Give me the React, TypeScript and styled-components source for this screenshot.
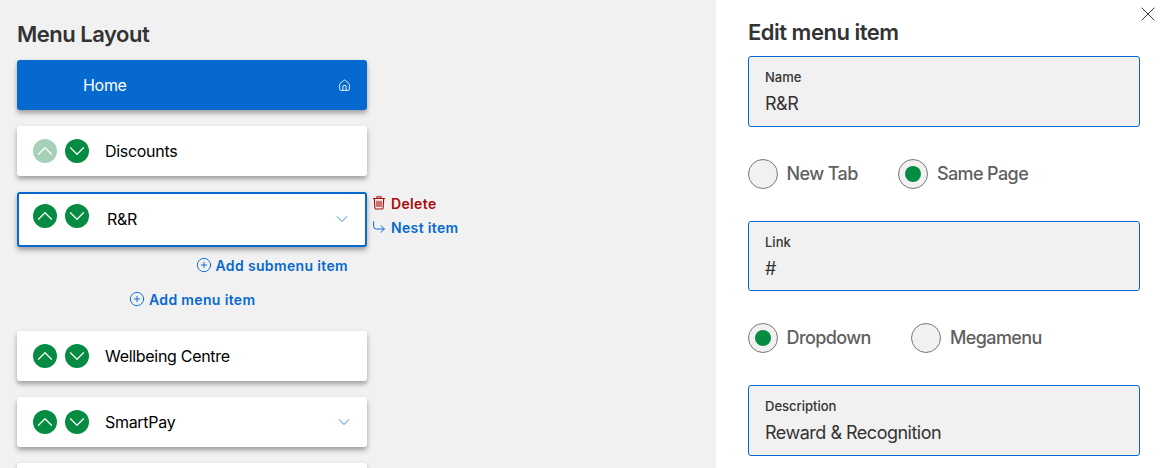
import React from "react";
import styled, { createGlobalStyle } from "styled-components";
import {
  ChevronDown,
  ChevronUp,
  CirclePlus,
  CornerDownRight,
  Home as HomeIcon,
  X,
} from "lucide-react";

const GlobalStyle = createGlobalStyle`
  html, body {
    margin: 0;
    padding: 0;
    height: 468px;
    overflow: hidden;
    font-family: Inter, "Liberation Sans", sans-serif;
    background: #ffffff;
  }
  * {
    box-sizing: border-box;
  }
  svg {
    flex-shrink: 0;
  }
`;

const Page = styled.div`
  display: flex;
  width: 1176px;
  height: 468px;
  overflow: hidden;
  position: relative;
`;

const LayoutPanel = styled.section`
  width: 716px;
  flex-shrink: 0;
  background: #f1f1f1;
  padding: 21px 0 0 17px;
`;

const Heading = styled.h2`
  margin: 0 0 13px;
  font-size: 22px;
  line-height: 26px;
  font-weight: 600;
  letter-spacing: -0.5px;
  color: #333333;
`;

const MenuList = styled.div`
  display: flex;
  flex-direction: column;
  gap: 16px;
`;

const Card = styled.div<{ $active?: boolean }>`
  width: 350px;
  height: ${(p) => (p.$active ? "55px" : "50px")};
  display: flex;
  align-items: ${(p) => (p.$active ? "flex-start" : "center")};
  padding: ${(p) => (p.$active ? "10px 16px 0 14px" : "0 16px")};
  background: #ffffff;
  border: ${(p) => (p.$active ? "2px solid #0669cf" : "none")};
  border-radius: 3px;
  box-shadow: 0 3px 5px rgba(0, 0, 0, 0.35);
`;

const HomeCard = styled(Card)`
  background: #0669cf;
  color: #ffffff;
  padding-left: 66px;
`;

const Arrows = styled.div`
  display: flex;
  gap: 8px;
  margin-right: 16px;
`;

const ArrowButton = styled.button<{ $disabled?: boolean }>`
  width: 24px;
  height: 24px;
  padding: 0;
  border: none;
  border-radius: 50%;
  display: flex;
  align-items: center;
  justify-content: center;
  overflow: hidden;
  color: #ffffff;
  background: ${(p) => (p.$disabled ? "#a6d1b9" : "#068b42")};
`;

const ItemName = styled.span<{ $active?: boolean }>`
  flex: 1;
  font-size: 16px;
  line-height: 20px;
  letter-spacing: -0.3px;
  color: inherit;
  margin-top: ${(p) => (p.$active ? "5px" : "0")};
  margin-left: ${(p) => (p.$active ? "2px" : "0")};
`;

const TrailingIcon = styled.span<{ $active?: boolean; $light?: boolean }>`
  display: flex;
  color: ${(p) => (p.$light ? "#ffffff" : "#6aa5e3")};
  margin-top: ${(p) => (p.$active ? "5px" : "0")};
  margin-right: ${(p) => (p.$light ? "0" : "-3px")};
`;

const ActiveRow = styled.div`
  display: flex;
  align-items: flex-start;
`;

const SideActions = styled.div`
  display: flex;
  flex-direction: column;
  gap: 4px;
  margin: 1px 0 0 4px;
`;

const ActionLink = styled.a<{ $danger?: boolean }>`
  display: flex;
  align-items: center;
  gap: 4px;
  height: 20px;
  font-size: 14px;
  font-weight: 600;
  letter-spacing: 0.35px;
  white-space: nowrap;
  color: ${(p) => (p.$danger ? "#a90a0a" : "#0669cf")};
`;

const AddRow = styled.div<{ $sub?: boolean }>`
  width: 350px;
  display: flex;
  justify-content: ${(p) => (p.$sub ? "flex-end" : "flex-start")};
  padding: ${(p) => (p.$sub ? "0 19px 0 0" : "0 0 0 112px")};
  margin: ${(p) => (p.$sub ? "-8px 0 -2px" : "0 0 6px")};
`;

const EditPanel = styled.section`
  flex: 1;
  padding: 19px 36px 0 32px;
  display: flex;
  flex-direction: column;
`;

const EditHeading = styled(Heading)`
  margin: 0 0 11px;
`;

const CloseButton = styled.button`
  position: absolute;
  top: 2px;
  right: 16px;
  padding: 0;
  border: none;
  background: none;
  display: flex;
  color: #333333;
`;

const Form = styled.form`
  display: flex;
  flex-direction: column;
  gap: 32px;
`;

const Field = styled.div`
  height: 70.5px;
  background: #f1f1f1;
  border: 1px solid #0669cf;
  border-radius: 3px;
  padding: 11px 16px 0;
`;

const FieldLabel = styled.div`
  font-size: 13px;
  line-height: 18px;
  font-weight: 500;
  color: #333333;
`;

const FieldValue = styled.div`
  margin-top: 7px;
  font-size: 18px;
  line-height: 22px;
  letter-spacing: -0.5px;
  color: #333333;
`;

const RadioRow = styled.div`
  display: flex;
  gap: 40.700px;
`;

const RadioOption = styled.label`
  display: flex;
  align-items: center;
  gap: 8.500px;
  font-size: 18px;
  line-height: 30px;
  font-weight: 500;
  letter-spacing: -0.6px;
  color: #5f5f5f;
`;

const RadioCircle = styled.span<{ $checked?: boolean }>`
  width: 30px;
  height: 30px;
  border-radius: 50%;
  border: 1px solid #777777;
  background: #f1f1f1;
  display: flex;
  align-items: center;
  justify-content: center;

  &::after {
    content: "";
    width: 16px;
    height: 16px;
    border-radius: 50%;
    background: ${(p) => (p.$checked ? "#068b42" : "transparent")};
  }
`;

function TrashIcon() {
  return (
    <svg width="16" height="16" viewBox="0 0 16 16" fill="none" stroke="#a90a0a" strokeWidth="1.1">
      <path d="M2 3.500h12M6 3.500V1.700h4v1.800M3.300 3.500l.6 9.600c0 .5.4.9.9.9h6.400c.5 0 .9-.4.9-.9l.6-9.600" />
      <path d="M6 5.700v6.300M8 5.700v6.300M10 5.700v6.300" />
    </svg>
  );
}

function MoveButtons({ upDisabled }: { upDisabled?: boolean }) {
  return (
    <Arrows>
      <ArrowButton $disabled={upDisabled}>
        <ChevronUp size={26} strokeWidth={1.1} />
      </ArrowButton>
      <ArrowButton>
        <ChevronDown size={26} strokeWidth={1.1} />
      </ArrowButton>
    </Arrows>
  );
}

function RadioPair({ options }: { options: { label: string; checked?: boolean }[] }) {
  return (
    <RadioRow>
      {options.map((option) => (
        <RadioOption key={option.label}>
          <RadioCircle $checked={option.checked} />
          {option.label}
        </RadioOption>
      ))}
    </RadioRow>
  );
}

function App() {
  return (
    <Page>
      <GlobalStyle />
      <LayoutPanel>
        <Heading>Menu Layout</Heading>
        <MenuList>
          <HomeCard>
            <ItemName>Home</ItemName>
            <TrailingIcon $light>
              <HomeIcon size={13} strokeWidth={1.6} />
            </TrailingIcon>
          </HomeCard>
          <Card>
            <MoveButtons upDisabled />
            <ItemName>Discounts</ItemName>
          </Card>
          <ActiveRow>
            <Card $active>
              <MoveButtons />
              <ItemName $active>R&amp;R</ItemName>
              <TrailingIcon $active>
                <ChevronDown size={20} strokeWidth={1.25} />
              </TrailingIcon>
            </Card>
            <SideActions>
              <ActionLink $danger>
                <TrashIcon />
                Delete
              </ActionLink>
              <ActionLink>
                <CornerDownRight size={16} strokeWidth={1.5} />
                Nest item
              </ActionLink>
            </SideActions>
          </ActiveRow>
          <AddRow $sub>
            <ActionLink>
              <CirclePlus size={16} strokeWidth={1.4} />
              Add submenu item
            </ActionLink>
          </AddRow>
          <AddRow>
            <ActionLink>
              <CirclePlus size={16} strokeWidth={1.4} />
              Add menu item
            </ActionLink>
          </AddRow>
          <Card>
            <MoveButtons />
            <ItemName>Wellbeing Centre</ItemName>
          </Card>
          <Card>
            <MoveButtons />
            <ItemName>SmartPay</ItemName>
            <TrailingIcon>
              <ChevronDown size={20} strokeWidth={1.25} />
            </TrailingIcon>
          </Card>
          <Card />
        </MenuList>
      </LayoutPanel>
      <EditPanel>
        <CloseButton>
          <X size={24} strokeWidth={1} />
        </CloseButton>
        <EditHeading>Edit menu item</EditHeading>
        <Form>
          <Field>
            <FieldLabel>Name</FieldLabel>
            <FieldValue>R&amp;R</FieldValue>
          </Field>
          <RadioPair options={[{ label: "New Tab" }, { label: "Same Page", checked: true }]} />
          <Field>
            <FieldLabel>Link</FieldLabel>
            <FieldValue>#</FieldValue>
          </Field>
          <RadioPair options={[{ label: "Dropdown", checked: true }, { label: "Megamenu" }]} />
          <Field>
            <FieldLabel>Description</FieldLabel>
            <FieldValue>Reward &amp; Recognition</FieldValue>
          </Field>
        </Form>
      </EditPanel>
    </Page>
  );
}

export default App;
